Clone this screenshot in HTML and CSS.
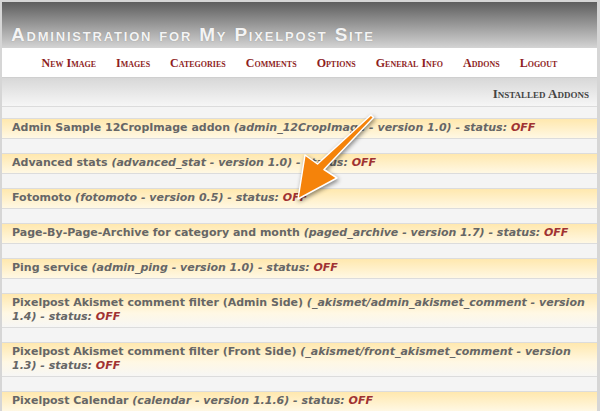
FILE: index.html
```html
<!DOCTYPE html>
<html lang="en">
<head>
    <meta charset="UTF-8">
    <title>Pixelpost Admin - Addons</title>
    <link rel="stylesheet" href="styles.css">
</head>
<body>
    <div class="page">
        <div class="header">
            <div class="site-title">Administration for My Pixelpost Site</div>
        </div>
        <div class="nav">
            <a href="#">New Image</a>
            <a href="#">Images</a>
            <a href="#">Categories</a>
            <a href="#">Comments</a>
            <a href="#">Options</a>
            <a href="#">General Info</a>
            <a href="#">Addons</a>
            <a href="#">Logout</a>
        </div>
        <div class="subnav">Installed Addons</div>

        <div class="addons">
            <div class="addon">Admin Sample 12CropImage addon <i>(admin_12CropImage - version 1.0) - status: <span class="off">OFF</span></i></div>
            <div class="addon">Advanced stats <i>(advanced_stat - version 1.0) - status: <span class="off">OFF</span></i></div>
            <div class="addon">Fotomoto <i>(fotomoto - version 0.5) - status: <span class="off">OFF</span></i></div>
            <div class="addon">Page-By-Page-Archive for category and month <i>(paged_archive - version 1.7) - status: <span class="off">OFF</span></i></div>
            <div class="addon">Ping service <i>(admin_ping - version 1.0) - status: <span class="off">OFF</span></i></div>
            <div class="addon">Pixelpost Akismet comment filter (Admin Side) <i>(_akismet/admin_akismet_comment - version 1.4) - status: <span class="off">OFF</span></i></div>
            <div class="addon">Pixelpost Akismet comment filter (Front Side) <i>(_akismet/front_akismet_comment - version 1.3) - status: <span class="off">OFF</span></i></div>
            <div class="addon">Pixelpost Calendar <i>(calendar - version 1.1.6) - status: <span class="off">OFF</span></i></div>
        </div>

        <!-- flecha de anotacion -->
        <svg class="arrow" width="600" height="411" viewBox="0 0 600 411">
            <polygon points="371,115 317.5,164 305,155 298,199 337,178 324,169.5 373.5,117.5"
                     fill="#f5830a" stroke="#ffffff" stroke-width="1.5" stroke-linejoin="round"/>
        </svg>
    </div>
</body>
</html>
```

FILE: styles.css
```css
body {
    margin: 0;
    background: #f4f4f4;
    font-family: "DejaVu Sans", Verdana, sans-serif;
}

.page {
    position: relative;
    height: 409px;
    overflow: hidden;
    border-top: 2px solid #d6d6d6;
    border-left: 2px solid #d6d6d6;
    border-right: 3px solid #d6d6d6;
    background: #f4f4f4;
}

.header {
    height: 46px;
    background: linear-gradient(to bottom, #5e5e5e, #d4d4d4);
    padding-left: 9px;
    box-sizing: border-box;
    padding-top: 23px;
}

.site-title {
    font-family: "Liberation Sans", Arial, sans-serif;
    font-weight: bold;
    font-variant: small-caps;
    font-size: 19px;
    letter-spacing: 1.8px;
    color: #f4f4f4;
    text-shadow: 0 0 1px #888;
    line-height: 20px;
}

.nav {
    height: 30px;
    background: #fff;
    border-bottom: 1px solid #cfcfcf;
    display: flex;
    justify-content: center;
    align-items: center;
    gap: 20px;
    padding-top: 2px;
    box-sizing: border-box;
}

.nav a {
    font-family: "Liberation Serif", "Times New Roman", serif;
    font-weight: bold;
    font-variant: small-caps;
    font-size: 12px;
    color: #8e1e1e;
    text-decoration: none;
}

.subnav {
    height: 29px;
    background: linear-gradient(to bottom, #d8d8d8, #f6f6f6);
    border-bottom: 1px solid #dcdcdc;
    text-align: right;
    padding-right: 8px;
    box-sizing: border-box;
    padding-top: 8px;
    font-family: "Liberation Serif", "Times New Roman", serif;
    font-weight: bold;
    font-variant: small-caps;
    font-size: 13px;
    color: #444;
}

.addons {
    padding-top: 11px;
    display: flex;
    flex-direction: column;
    gap: 14px;
}

.addon {
    border-top: 1px solid #dcdcdc;
    border-bottom: 1px solid #dcdcdc;
    background: linear-gradient(to bottom, #ffe8ae 0px, #fff8e4 19px, #f6f6f6 34px);
    padding: 2px 8px 3px 10px;
    font-size: 11px;
    font-weight: bold;
    line-height: 14px;
    color: #666;
}

.off {
    color: #a03232;
}

.arrow {
    position: absolute;
    left: -2px;
    top: -2px;
    pointer-events: none;
    filter: drop-shadow(1px 2px 2px rgba(0, 0, 0, 0.45));
}
```
